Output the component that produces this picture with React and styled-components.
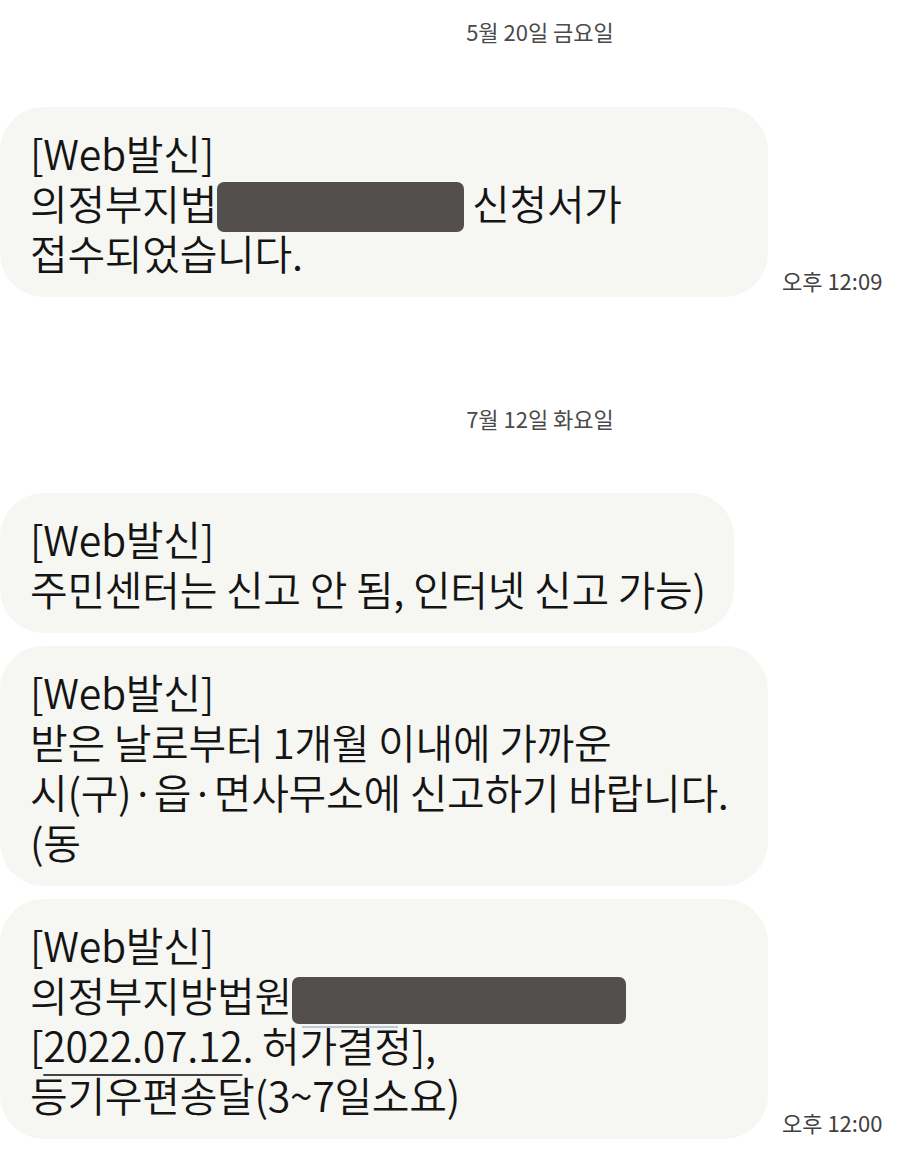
import React from 'react';
import styled, { createGlobalStyle } from 'styled-components';

const GlobalStyle = createGlobalStyle`
  html, body {
    margin: 0;
    padding: 0;
    background: #ffffff;
  }
  body {
    font-family: 'Noto Sans CJK KR', 'Noto Sans', sans-serif;
    -webkit-font-smoothing: antialiased;
  }
`;

const Thread = styled.div`
  width: 900px;
  display: flex;
  flex-direction: column;
  padding-bottom: 8px;
`;

const DateDivider = styled.div`
  padding-left: 180px;
  margin: ${(p) => p.$top}px 0 ${(p) => p.$bottom}px;
  text-align: center;
  font-size: 22px;
  line-height: 26px;
  color: #4a4a4a;
`;

const MessageRow = styled.div`
  display: flex;
  align-items: flex-end;
  gap: 14px;
  margin-bottom: 13px;
`;

const Bubble = styled.div`
  box-sizing: border-box;
  width: ${(p) => (p.$fit ? 'auto' : '768px')};
  padding: 20px 28px 20px 30px;
  background: #f6f6f2;
  border-radius: 44px;
  color: #141414;
  font-size: 41px;
  font-weight: 350;
  line-height: 50px;
  letter-spacing: -0.3px;
`;

const Line = styled.div`
  white-space: nowrap;
`;

const Redacted = styled.span`
  position: relative;
  display: inline-block;
  width: ${(p) => p.$width}px;
  height: ${(p) => p.$height}px;
  margin: -4px ${(p) => p.$gap}px -6px 0;
  vertical-align: -6px;
  background: #524f4e;
  border-radius: 7px;

  &::after {
    content: '';
    display: ${(p) => (p.$link ? 'block' : 'none')};
    position: absolute;
    left: 10px;
    bottom: -4px;
    width: 96px;
    height: 2px;
    background: #b9c9d9;
  }
`;

const Underlined = styled.span`
  text-decoration: underline;
  text-decoration-color: #454545;
  text-decoration-thickness: 2px;
  text-underline-offset: 12px;
`;

const Time = styled.div`
  flex-shrink: 0;
  margin-bottom: 4px;
  font-size: 22px;
  line-height: 26px;
  color: #404040;
  white-space: nowrap;
`;

export default function App() {
  return (
    <>
      <GlobalStyle />
      <Thread>
        <DateDivider $top={18} $bottom={63}>5월 20일 금요일</DateDivider>

        <MessageRow>
          <Bubble>
            <Line>[Web발신]</Line>
            <Line>
              의정부지법<Redacted $width={247} $height={50} $gap={8} />신청서가
            </Line>
            <Line>접수되었습니다.</Line>
          </Bubble>
          <Time>오후 12:09</Time>
        </MessageRow>

        <DateDivider $top={95} $bottom={62}>7월 12일 화요일</DateDivider>

        <MessageRow>
          <Bubble $fit>
            <Line>[Web발신]</Line>
            <Line>주민센터는 신고 안 됨, 인터넷 신고 가능)</Line>
          </Bubble>
        </MessageRow>

        <MessageRow>
          <Bubble>
            <Line>[Web발신]</Line>
            <Line>받은 날로부터 1개월 이내에 가까운</Line>
            <Line>시(구)·읍·면사무소에 신고하기 바랍니다.</Line>
            <Line>(동</Line>
          </Bubble>
        </MessageRow>

        <MessageRow>
          <Bubble>
            <Line>[Web발신]</Line>
            <Line>
              의정부지방법원<Redacted $width={334} $height={47} $gap={0} $link />
            </Line>
            <Line>
              [<Underlined>2022.07.12</Underlined>. 허가결정],
            </Line>
            <Line>등기우편송달(3~7일소요)</Line>
          </Bubble>
          <Time>오후 12:00</Time>
        </MessageRow>
      </Thread>
    </>
  );
}
